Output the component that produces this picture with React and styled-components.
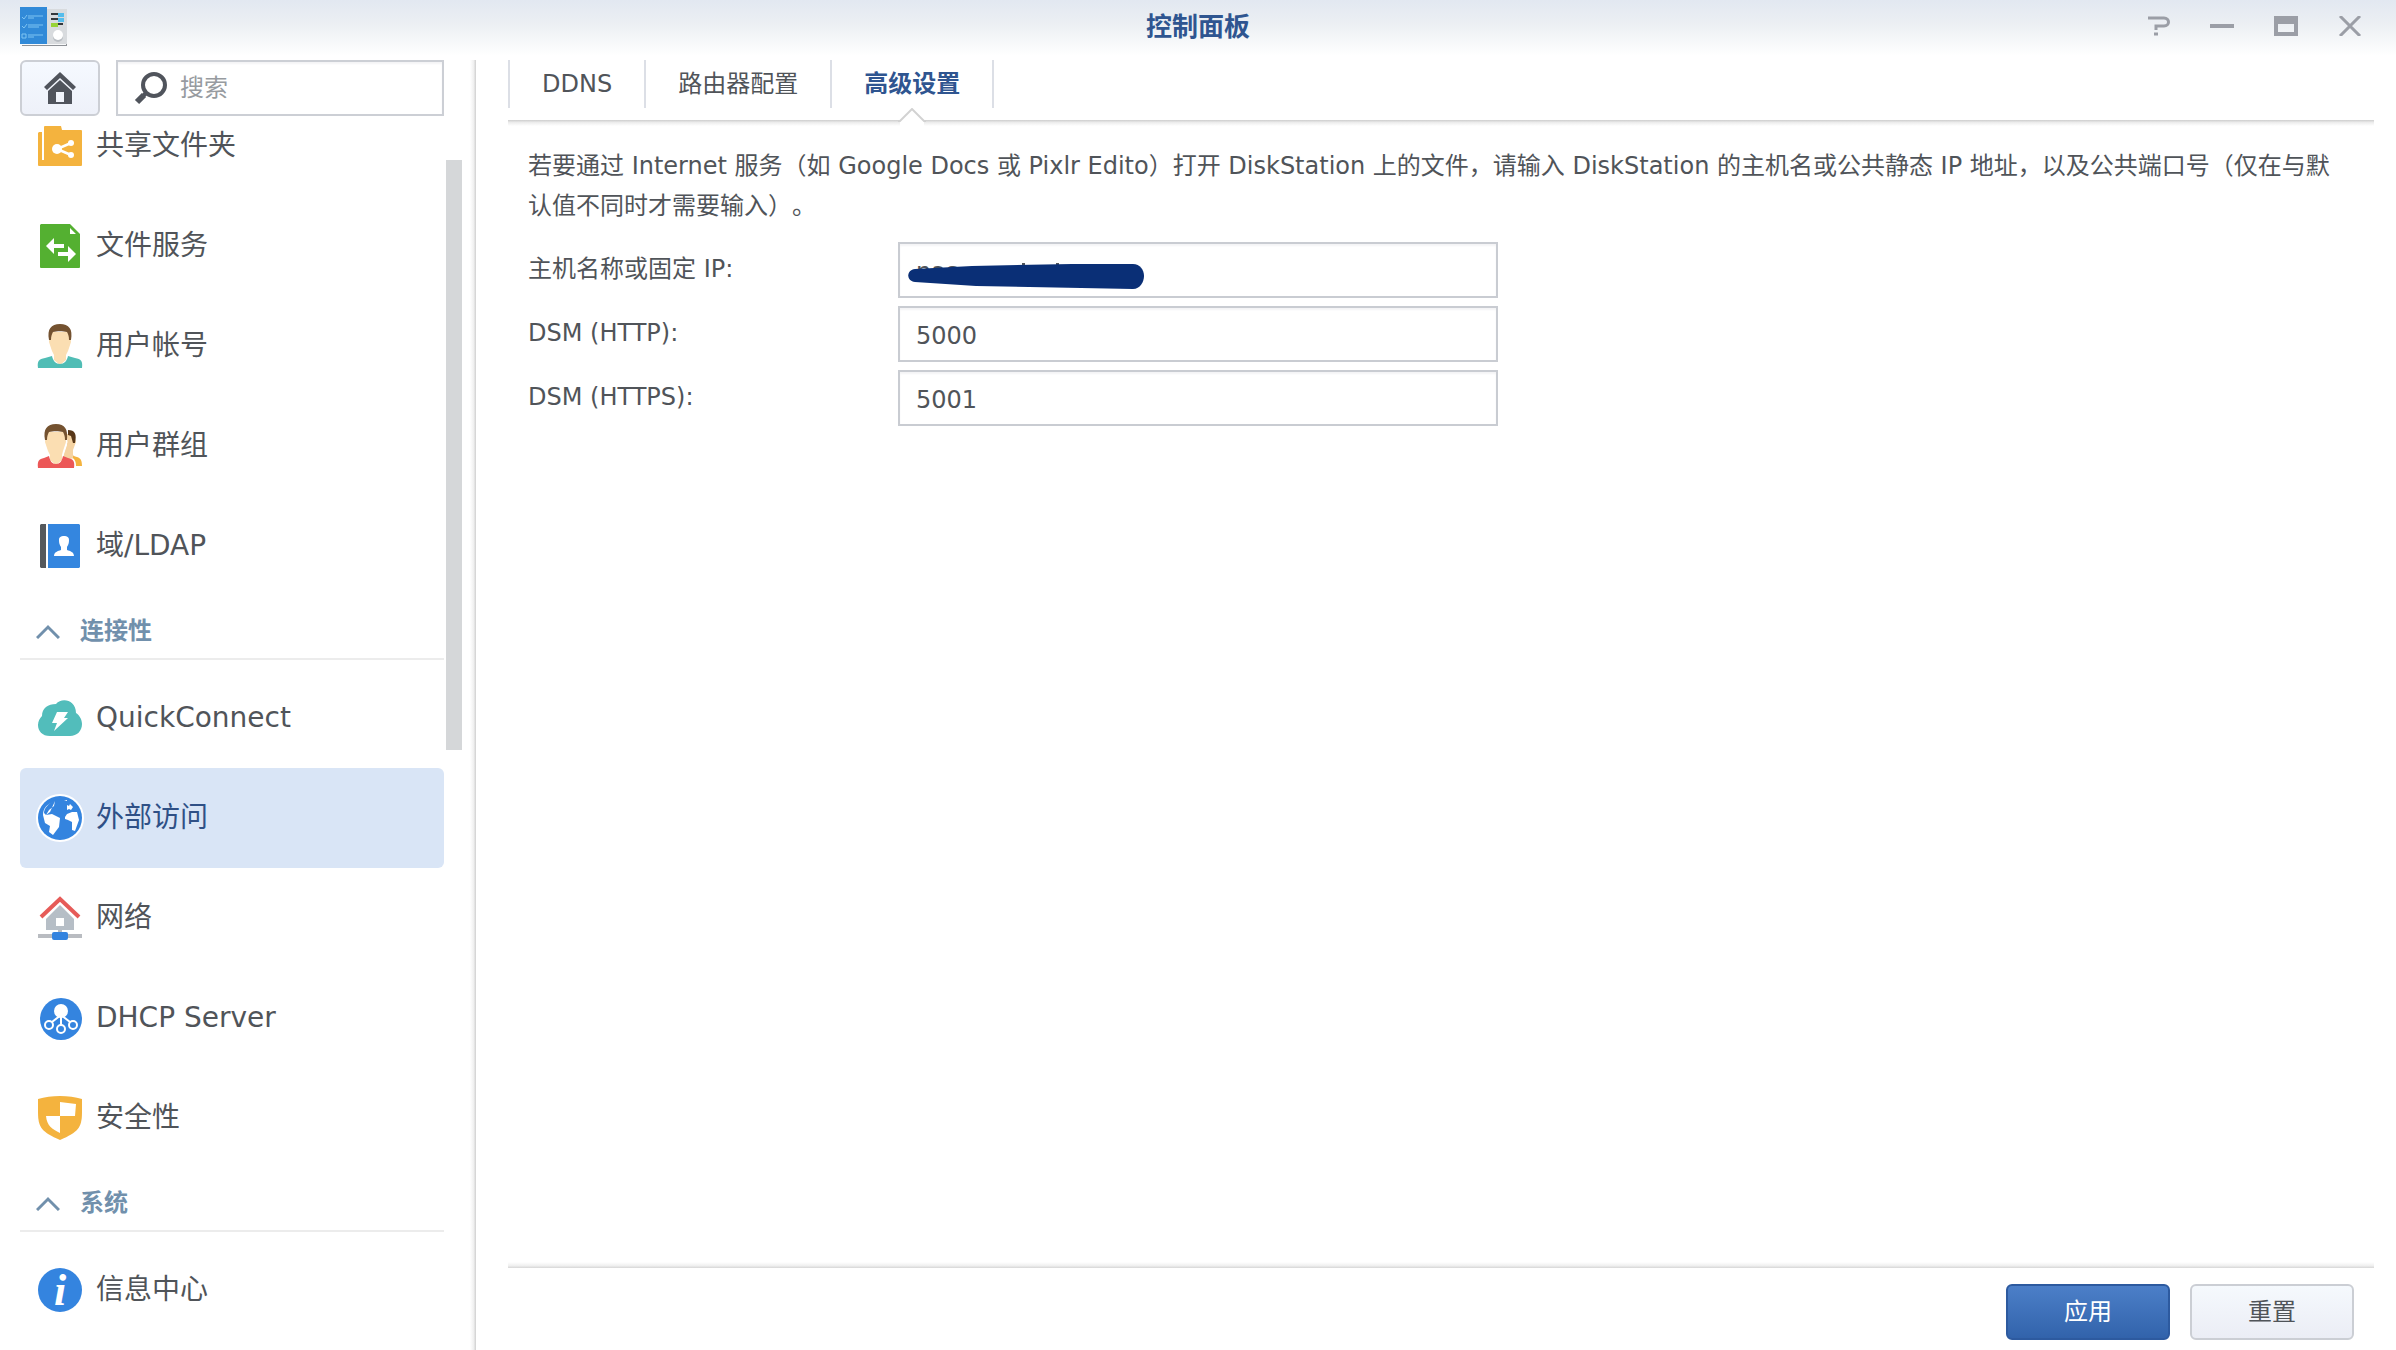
import React, { useState } from 'react';
import styled, { createGlobalStyle, css } from 'styled-components';

const GlobalStyle = createGlobalStyle`
  * {
    box-sizing: border-box;
  }

  html,
  body {
    margin: 0;
    height: 100%;
    overflow: hidden;
    background: #fff;
  }

  body,
  button,
  input {
    font-family: 'DejaVu Sans', 'Noto Sans CJK SC', sans-serif;
    font-size: 24px;
    line-height: 40px;
    color: #505459;
  }
`;

const Window = styled.div`
  display: flex;
  flex-direction: column;
  height: 100vh;
`;

const TitleBar = styled.header`
  display: grid;
  grid-template-columns: 1fr auto 1fr;
  flex: none;
  height: 60px;
  padding: 0 20px;
  background: linear-gradient(#e2e8f1, #eceff3 24px, #fff 56px);
`;

const AppIcon = styled.svg`
  width: 48px;
  height: 40px;
  margin-top: 6px;
`;

const Title = styled.h1`
  margin: 0;
  font-size: 26px;
  line-height: 54px;
  color: #2f5590;
`;

const WindowButtons = styled.div`
  display: flex;
  justify-content: flex-end;
  gap: 40px;
  height: 52px;
  padding-right: 14px;
`;

const WindowButton = styled.button`
  display: flex;
  align-items: center;
  padding: 0;
  border: none;
  background: transparent;
  color: #9b9ea6;
`;

const Body = styled.div`
  display: flex;
  flex: 1;
  min-height: 0;
`;

const Sidebar = styled.aside`
  display: flex;
  flex-direction: column;
  flex: none;
  width: 476px;
  padding-left: 20px;
  background: linear-gradient(to right, #fff, #f0f0f0 60%, #cfcfcf) right / 6px 100% no-repeat;
`;

const SideTools = styled.div`
  display: flex;
  flex: none;
  gap: 16px;
  width: 424px;
  height: 56px;
`;

const HomeButton = styled.button`
  display: flex;
  align-items: center;
  justify-content: center;
  flex: none;
  width: 80px;
  padding: 0;
  border: 2px solid #cccfd5;
  border-radius: 6px;
  background: linear-gradient(#f5f9ff, #eef1f9);
`;

const SearchBox = styled.label`
  display: flex;
  flex: 1;
  align-items: center;
  gap: 12px;
  min-width: 0;
  padding-left: 16px;
  border: 2px solid #cccfd5;
  box-shadow: inset 0 2px 2px #f4f4f6;
`;

const SearchInput = styled.input`
  flex: 1;
  min-width: 0;
  padding: 0;
  border: none;
  outline: none;
  background: transparent;

  &::placeholder {
    color: #979ba0;
    opacity: 1;
  }
`;

const SideScroll = styled.div`
  display: flex;
  flex: 1;
  gap: 2px;
  min-height: 0;
  overflow: hidden;
`;

const Menu = styled.nav`
  width: 424px;
  margin-top: -20px;
`;

const ScrollThumb = styled.div`
  width: 16px;
  height: 590px;
  margin-top: 44px;
  background: #d5d7d9;
`;

const MenuItem = styled.a`
  display: flex;
  align-items: center;
  gap: 12px;
  height: 100px;
  padding-left: 16px;
  border-radius: 6px;
  font-size: 28px;
  text-decoration: none;
  color: #505459;

  ${({ $active }) =>
    $active &&
    css`
      background: #d9e5f6;
      color: #2f5086;
    `}
`;

const MenuGroup = styled.button`
  display: flex;
  align-items: center;
  gap: 20px;
  width: 100%;
  height: 64px;
  margin: 0 0 8px;
  padding: 8px 0 0 16px;
  border: none;
  border-bottom: 2px solid #ececec;
  background: transparent;
  font-weight: bold;
  color: #7190ac;
`;

const Main = styled.main`
  display: flex;
  flex-direction: column;
  flex: 1;
  min-width: 0;
  padding: 0 22px 0 32px;
`;

const Tabs = styled.div`
  display: flex;
  flex: none;
  height: 66px;
  background: linear-gradient(#cdcdcd, #ececec 40%, #fff) bottom / 100% 6px no-repeat;
`;

const Tab = styled.button`
  position: relative;
  height: 48px;
  padding: 0 32px;
  border: none;
  border-left: 2px solid #dcdfe6;
  background: transparent;

  &:last-child {
    border-right: 2px solid #dcdfe6;
  }

  ${({ $active }) =>
    $active &&
    css`
      font-weight: bold;
      color: #2f5590;
    `}
`;

const Notch = styled.svg`
  position: absolute;
  top: 48px;
  left: 50%;
  margin-left: -14px;
`;

const Panel = styled.section`
  flex: 1;
  min-height: 0;
  padding: 20px 20px 0;
`;

const Description = styled.p`
  margin: 0 0 16px;
  padding-right: 8px;
  text-spacing-trim: space-all;
`;

const Field = styled.div`
  display: grid;
  grid-template-columns: 370px minmax(0, 600px);
  height: 56px;
  margin-bottom: 8px;
`;

const FieldLabel = styled.label`
  line-height: 54px;
`;

const InputWrap = styled.div`
  position: relative;
`;

const TextInput = styled.input`
  width: 100%;
  height: 56px;
  padding: 4px 16px 0;
  border: 2px solid #c9ccd2;
  outline: none;
  box-shadow: inset 0 2px 2px #f4f4f6;
`;

const Marker = styled.svg`
  position: absolute;
  top: 18px;
  left: 8px;
`;

const Footer = styled.footer`
  display: flex;
  flex: none;
  justify-content: flex-end;
  gap: 20px;
  padding: 22px 20px 10px;
  background: linear-gradient(#fff, #f0f0f0 60%, #d6d6d6) top / 100% 6px no-repeat;
`;

const Button = styled.button`
  width: 164px;
  height: 56px;
  padding: 0;
  border: 2px solid ${({ $primary }) => ($primary ? '#2d5a9f' : '#cbced4')};
  border-radius: 6px;
  background: ${({ $primary }) =>
    $primary ? 'linear-gradient(#4c7fc8, #3263ab)' : 'linear-gradient(#f5f9fd, #ebedf5)'};
  color: ${({ $primary }) => ($primary ? '#fff' : '#505459')};
`;

const icons = {
  share: (
    <>
      <path d="M3 10h3v28h2V5a1 1 0 0 1 1-1h16l1 4h19a1 1 0 0 1 1 1v34a1 1 0 0 1-1 1H3a1 1 0 0 1-1-1V11z" fill="#f4b33e" />
      <path d="M35 21 21 27l14 6" fill="none" stroke="#fff" strokeWidth="2.5" />
      <circle cx="21" cy="27" r="5" fill="#fff" />
      <circle cx="35" cy="21" r="3" fill="#fff" />
      <circle cx="35" cy="33" r="3" fill="#fff" />
    </>
  ),
  files: (
    <>
      <path d="M5 2h29l10 10v33a1 1 0 0 1-1 1H5a1 1 0 0 1-1-1V3z" fill="#54b031" />
      <path d="M34 6v6h6zM10 24l8-8v6h10v6H22v-2h-4v6zM40 32l-8-8v6H22v4h10v6z" fill="#fff" />
      <path d="M18 26h10v4h-6v-2h-4z" fill="#54b031" />
    </>
  ),
  user: (
    <>
      <path d="M14 10h20l1 10-3 9-2 4v5l-6 5-6-5v-5l-2-4-3-9z" fill="#fbdeb2" />
      <path d="M13 18c-2-11 2-16 11-16s13 5 11 16h-2c0-4-1-6-2-8-4-1-10-1-14 0-1 2-2 4-2 8z" fill="#745230" />
      <path d="M2 46c-1-7 1-9 7-10l7-2c1 5 4 8 8 8s7-3 8-8l7 2c6 1 8 3 7 10z" fill="#50bdb5" />
    </>
  ),
  group: (
    <>
      <path d="M30 12h8l2 8-3 8v5l4 3-9 1-5-2 4-12z" fill="#f5d3a2" />
      <path d="M32 8c7 0 9 4 7 13h-2l-2-7-3-1z" fill="#573718" />
      <path d="m37 34 4 1c4 1 5 4 5 9h-6c0-4-1-6-3-8z" fill="#f4b33e" />
      <path
        d="M10 10h19l1 10-3 9-1 4v5l-6 5-6-5v-5l-2-4-3-9z"
        fill="#fbdeb2"
        stroke="#fff"
        strokeWidth="3"
        paintOrder="stroke"
      />
      <path d="M9 18C7 7 11 2 20 2s12 5 11 16h-2c0-4-1-6-2-8-4-1-10-1-14 0-1 2-2 4-2 8z" fill="#745230" />
      <path d="M2 46c-1-7 1-9 6-10l5-2c1 5 3 8 7 8s6-3 7-8l5 2c5 1 7 3 6 10z" fill="#ec5757" />
    </>
  ),
  ldap: (
    <>
      <path d="M5 2h5v44H5l-1-1V3z" fill="#55595d" />
      <path d="M12 2h31l1 1v42l-1 1H12z" fill="#3486df" />
      <path d="M23 18c0-3 2-4 5-4s5 1 5 4c0 4-1 5-2 7v3c3 1 7 2 7 6H18c0-4 4-5 7-6v-3c-1-2-2-3-2-7z" fill="#fff" />
    </>
  ),
  quick: (
    <>
      <path d="M14 42C6 42 2 37 2 31c0-4 2-7 4-9 0-8 6-12 14-12 6-7 20-4 20 9 3 2 6 6 6 11 0 7-5 12-12 12z" fill="#52bdbb" />
      <path d="M21 18h11l-4 6h4L18 37l3-8h-5z" fill="#fff" />
    </>
  ),
  globe: (
    <>
      <circle cx="24" cy="24" r="24" fill="#fff" />
      <circle cx="24" cy="24" r="22" fill="#3484df" />
      <path
        d="M19 7c-6 2-11 7-11 12l2 2 6-1 8 4-1 9-6 8-4-3 1-6-5-3-2-8c0-7 4-11 12-14l-1 5-5 4-3 5 4-3z"
        fill="#fff"
      />
      <path d="m29 23 2-3 5-2h5l2 8-4 11-3-1v-8l-4-2-3-1zM31 11l2 1 1-2 3 3-2 3-2-1-2 1zM28 7l3-1v1z" fill="#fff" />
    </>
  ),
  network: (
    <>
      <path d="m24 11 14 14v11H10V25z" fill="#b6bec6" />
      <path d="M20 24h8v8h-8z" fill="#fff" />
      <path d="M5 23 24 5l19 18" fill="none" stroke="#e65b58" strokeWidth="4" />
      <path d="M2 40h20v-4h4v4h20v4H2z" fill="#b9bcc1" />
      <rect x="16" y="38" width="16" height="8" rx="2" fill="#3484df" />
    </>
  ),
  dhcp: (
    <>
      <circle cx="25" cy="25" r="21" fill="#3484df" />
      <g fill="none" stroke="#fff" strokeWidth="2">
        <path d="m25 21-9 7M25 20v11M25 21l9 7" />
        <circle cx="13" cy="31" r="4" />
        <circle cx="25" cy="35" r="4" />
        <circle cx="37" cy="31" r="4" />
      </g>
      <circle cx="25" cy="17" r="7" fill="#fff" />
    </>
  ),
  shield: (
    <>
      <path d="M2 5c13-4 31-4 44 0v13c0 16-4 20-22 28C6 38 2 34 2 18z" fill="#f4b33e" />
      <path d="m24 8 16 2-1 12H24v17c-8-4-13-7-14-17h14z" fill="#fff" />
    </>
  ),
};

const InfoLetter = styled.text`
  font: italic bold 44px 'Liberation Serif', serif;
  fill: #fff;
  text-anchor: middle;
`;

icons.info = (
  <>
    <circle cx="24" cy="24" r="22" fill="#3484df" />
    <InfoLetter x="24" y="39">i</InfoLetter>
  </>
);

const menu = [
  { icon: 'share', label: '共享文件夹' },
  { icon: 'files', label: '文件服务' },
  { icon: 'user', label: '用户帐号' },
  { icon: 'group', label: '用户群组' },
  { icon: 'ldap', label: '域/LDAP' },
  { group: '连接性' },
  { icon: 'quick', label: 'QuickConnect' },
  { icon: 'globe', label: '外部访问' },
  { icon: 'network', label: '网络' },
  { icon: 'dhcp', label: 'DHCP Server' },
  { icon: 'shield', label: '安全性' },
  { group: '系统' },
  { icon: 'info', label: '信息中心' },
];

const tabs = ['DDNS', '路由器配置', '高级设置'];

function Header() {
  return (
    <TitleBar>
      <AppIcon viewBox="0 0 48 40">
        <path d="M2 39h44V4h1v36H2z" fill="#8d9196" />
        <path d="M26 3h21v35H26z" fill="#d8dbde" />
        <path d="M0 1h27v37H0z" fill="#318ad8" />
        <path
          d="m2 11 2 2 3-4M8 10h15M8 12h6M2 20l2 2 3-4M8 19h15M8 21h11M2 28h4v4H2zM8 29h15M8 31h6"
          fill="none"
          stroke="#7fc4f2"
        />
        <path d="M31 7h12v2H31zM31 12h12v2H31zM31 17h12v2H31z" fill="#34383c" />
        <path d="M38 7h6v4h-6zM38 12h6v4h-6z" fill="#55bdec" />
        <path d="M31 17h7v4h-7z" fill="#98d336" />
        <circle cx="38" cy="31" r="5" fill="#b9bec3" />
        <circle cx="38" cy="29" r="5" fill="#fff" />
      </AppIcon>
      <Title>控制面板</Title>
      <WindowButtons>
        <WindowButton aria-label="帮助">
          <svg width="24" height="20" fill="none" stroke="currentColor" strokeWidth="4">
            <path d="M2 2h16c6 0 6 8 0 8h-8v4M8 18h4" strokeWidth="3" />
          </svg>
        </WindowButton>
        <WindowButton aria-label="最小化">
          <svg width="24" height="20" fill="currentColor">
            <path d="M0 8h24v4H0z" />
          </svg>
        </WindowButton>
        <WindowButton aria-label="最大化">
          <svg width="24" height="20" fill="currentColor" fillRule="evenodd">
            <path d="M0 0h24v20H0zM4 8v8h16V8z" />
          </svg>
        </WindowButton>
        <WindowButton aria-label="关闭">
          <svg width="24" height="20" fill="none" stroke="currentColor" strokeWidth="3">
            <path d="m2 0 20 20M22 0 2 20" />
          </svg>
        </WindowButton>
      </WindowButtons>
    </TitleBar>
  );
}

function SideMenu() {
  return (
    <Sidebar>
      <SideTools>
        <HomeButton aria-label="主页">
          <svg width="32" height="32" fill="#50545c">
            <path d="M16 0 32 15l-3 3L16 6 3 18l-3-3z" />
            <path fillRule="evenodd" d="m16 8 12 11v13H4V19zM12 20v10h8V20z" />
          </svg>
        </HomeButton>
        <SearchBox>
          <svg width="34" height="34" fill="none" stroke="#50545c">
            <circle cx="20" cy="14" r="11" strokeWidth="4" />
            <path d="m12 22-3 3" strokeWidth="4" />
            <path d="m10 24-7 7" strokeWidth="6" />
          </svg>
          <SearchInput placeholder="搜索" aria-label="搜索" />
        </SearchBox>
      </SideTools>
      <SideScroll>
        <Menu>
          {menu.map(item =>
            item.group ? (
              <MenuGroup key={item.group}>
                <svg width="24" height="16" fill="none" stroke="currentColor" strokeWidth="3">
                  <path d="M1 15 12 4l11 11" />
                </svg>
                {item.group}
              </MenuGroup>
            ) : (
              <MenuItem key={item.label} href="#" $active={item.icon === 'globe'}>
                <svg width="48" height="48">{icons[item.icon]}</svg>
                {item.label}
              </MenuItem>
            ),
          )}
        </Menu>
        <ScrollThumb />
      </SideScroll>
    </Sidebar>
  );
}

function App() {
  const [tab, setTab] = useState('高级设置');

  return (
    <Window>
      <GlobalStyle />
      <Header />
      <Body>
        <SideMenu />
        <Main>
          <Tabs role="tablist">
            {tabs.map(name => (
              <Tab key={name} role="tab" $active={name === tab} onClick={() => setTab(name)}>
                {name}
                {name === tab && (
                  <Notch width="28" height="18">
                    <path d="M2 12 14 0l12 12v6H2z" fill="#fff" />
                    <path d="M0 13h2L14 1l12 12h2" fill="none" stroke="#d2d2d2" strokeWidth="2" />
                  </Notch>
                )}
              </Tab>
            ))}
          </Tabs>
          <Panel>
            <Description>
              若要通过 Internet 服务（如 Google Docs 或 Pixlr Edito）打开 DiskStation 上的文件，请输入
              DiskStation 的主机名或公共静态 IP 地址，以及公共端口号（仅在与默认值不同时才需要输入）。
            </Description>
            <Field>
              <FieldLabel htmlFor="host">主机名称或固定 IP:</FieldLabel>
              <InputWrap>
                <TextInput id="host" defaultValue="nas" />
                <Marker width="240" height="30">
                  <path d="M116 3h3v4h-3zM150 3h3v4h-3z" fill="#505459" />
                  <path
                    d="M9 9 66 6l100-2h61c7 0 11 6 11 12s-4 13-11 13L70 26 9 22C0 21 0 10 9 9z"
                    fill="#0a2f76"
                  />
                </Marker>
              </InputWrap>
            </Field>
            <Field>
              <FieldLabel htmlFor="http">DSM (HTTP):</FieldLabel>
              <TextInput id="http" defaultValue="5000" />
            </Field>
            <Field>
              <FieldLabel htmlFor="https">DSM (HTTPS):</FieldLabel>
              <TextInput id="https" defaultValue="5001" />
            </Field>
          </Panel>
          <Footer>
            <Button $primary>应用</Button>
            <Button>重置</Button>
          </Footer>
        </Main>
      </Body>
    </Window>
  );
}

export default App;
